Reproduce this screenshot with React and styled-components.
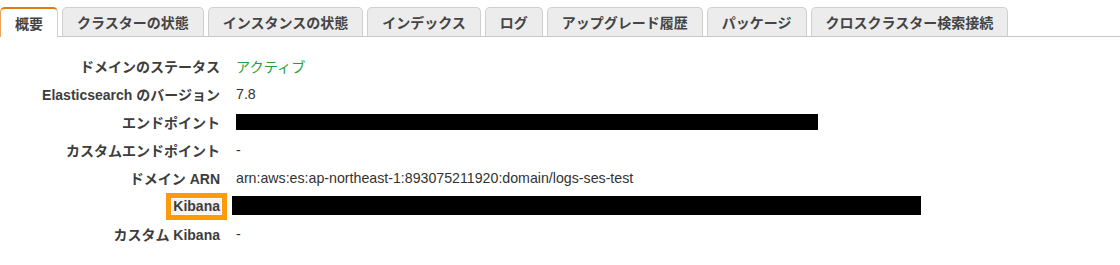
import styled, { createGlobalStyle, css } from "styled-components";

const GlobalStyle = createGlobalStyle`
  html, body {
    margin: 0;
    padding: 0;
    background: #fff;
  }
  body {
    font-family: "Liberation Sans", "Noto Sans CJK JP", sans-serif;
    color: #333;
  }
`;

const tabs = [
  "概要",
  "クラスターの状態",
  "インスタンスの状態",
  "インデックス",
  "ログ",
  "アップグレード履歴",
  "パッケージ",
  "クロスクラスター検索接続",
];

const Page = styled.div`
  width: 1120px;
  height: 265px;
  overflow: hidden;
`;

const TabBar = styled.div`
  display: flex;
  gap: 4px;
  padding-top: 7px;
  border-bottom: 1px solid #c8c8c8;
`;

const Tab = styled.div`
  height: 29px;
  padding: 0 14px;
  display: flex;
  align-items: center;
  font-size: 14px;
  font-weight: bold;
  color: #444;
  background: #ececec;
  border: 1px solid #cfcfcf;
  border-bottom: none;
  border-radius: 5px 5px 0 0;
  box-sizing: border-box;
  ${(props) =>
    props.active &&
    css`
      background: #fff;
      border-top: 2px solid #e07b12;
      border-left: 1px solid #e9a35c;
      height: 30px;
      margin-bottom: -1px;
      padding: 0 14px 0 14px;
    `}
`;

const Details = styled.div`
  display: grid;
  grid-template-columns: 220px auto;
  column-gap: 16px;
  grid-auto-rows: 28px;
  padding-top: 15px;
  font-size: 14px;
`;

const Label = styled.div`
  font-weight: bold;
  color: #3d3d3d;
  display: flex;
  align-items: center;
  justify-content: flex-end;
  text-align: right;
`;

const Highlight = styled.span`
  display: inline-block;
  line-height: 15px;
  padding: 0 1px;
  background: #f4f4f4;
  outline: 5px solid #ff9a0a;
  outline-offset: 1px;
  margin: 1px -1px 0 0;
`;

const Value = styled.div`
  display: flex;
  align-items: center;
  font-size: 14.2px;
  color: ${(props) => (props.green ? "#23a033" : "#333")};
`;

const Redact = styled.div`
  background: #000;
  height: ${(props) => props.h}px;
  width: ${(props) => props.w}px;
  margin-left: ${(props) => props.shift || 0}px;
  margin-top: ${(props) => props.top || 0}px;
`;

export default function App() {
  return (
    <Page>
      <GlobalStyle />
      <TabBar>
        {tabs.map((t, i) => (
          <Tab key={t} active={i === 0}>
            {t}
          </Tab>
        ))}
      </TabBar>
      <Details>
        <Label>ドメインのステータス</Label>
        <Value green>アクティブ</Value>

        <Label>Elasticsearch のバージョン</Label>
        <Value>7.8</Value>

        <Label>エンドポイント</Label>
        <Value>
          <Redact w={582} h={16} top={-1} />
        </Value>

        <Label>カスタムエンドポイント</Label>
        <Value>-</Value>

        <Label>ドメイン ARN</Label>
        <Value>arn:aws:es:ap-northeast-1:893075211920:domain/logs-ses-test</Value>

        <Label>
          <Highlight>Kibana</Highlight>
        </Label>
        <Value>
          <Redact w={689} h={19} shift={-4} top={-2} />
        </Value>

        <Label>カスタム Kibana</Label>
        <Value>-</Value>
      </Details>
    </Page>
  );
}
